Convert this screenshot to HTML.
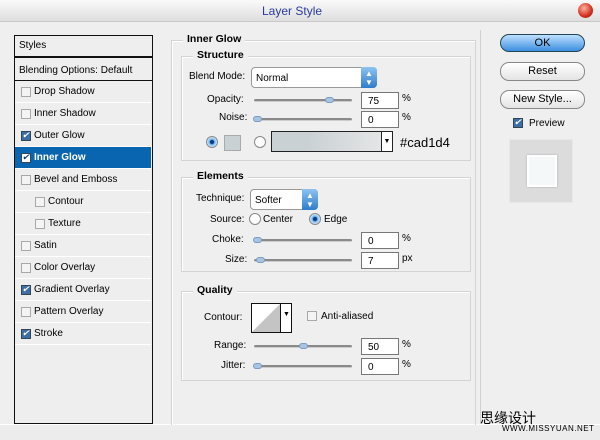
<!DOCTYPE html>
<html><head><style>
*{margin:0;padding:0;box-sizing:border-box}
body{width:600px;height:440px;background:#efefef;font-family:"Liberation Sans",Tahoma,sans-serif;font-size:10px;color:#000;position:relative;overflow:hidden}
.a{position:absolute}
.t{position:absolute;white-space:nowrap;font-size:10px}
.grp{position:absolute;border:1px solid #d4d4d4;box-shadow:1px 1px 0 #fff inset}
.lbl{position:absolute;background:#efefef;padding:0 4px;font-weight:bold;font-size:10.5px}
.row{position:absolute;left:15px;width:136px;height:22px;border-bottom:1px solid #fff;background:#eeeeee}
.cb{position:absolute;width:10px;height:10px;border:1px solid #a8a8a8;background:#f4f4f4;top:6px}
.ck{background:#3d6fa6;border-color:#345}
.ck:after{content:"✔";position:absolute;color:#fff;font-size:9px;left:0;top:-2px}
.ckw{background:#fff;border-color:#345}
.ckw:after{content:"✔";position:absolute;color:#0a3a80;font-size:9px;left:0;top:-2px}
.row span{position:absolute;top:5px}
.sl{position:absolute;height:3px;width:98px;background:#8a8a8a;border-radius:2px;border-bottom:1px solid #ccc}
.kn{position:absolute;width:9px;height:6px;background:#a9c4e0;border:1px solid #7a9cc0;border-radius:3px;top:-2px}
.in{position:absolute;width:38px;height:17px;background:#fff;border:1px solid #777;padding:3px 0 0 6px;font-size:10px}
.btn{position:absolute;left:500px;width:85px;height:19px;border:1px solid #888;border-radius:9px;background:linear-gradient(#fff,#e4e4e4);text-align:center;font-size:11px;line-height:17px}
.dd{position:absolute;background:#fff;border:1px solid #999;border-radius:4px;padding:5px 0 0 4px;font-size:10px}
.arr{position:absolute;right:-1px;top:-1px;bottom:-1px;width:16px;background:linear-gradient(#8ec3f0,#2e7ccb);border-radius:0 4px 4px 0;color:#fff;font-size:8px;text-align:center;line-height:9px;padding-top:2px}
.rd{position:absolute;width:12px;height:12px;border-radius:50%;border:1px solid #888;background:#fff}
.rs{background:radial-gradient(#0b3e80 25%,#6ab0f0 35%,#d6ebff 70%)}
</style></head><body>
<div class="a" style="left:0;top:0;width:600px;height:22px;background:linear-gradient(#fafafa,#dedede);border-bottom:1px solid #c8c8c8"></div>
<div class="t" style="left:262px;top:4px;font-size:12px;color:#2a3a9a">Layer Style</div>
<div class="a" style="left:578px;top:3px;width:15px;height:15px;border-radius:50%;background:radial-gradient(circle at 40% 35%,#ffb0a0,#d0301c 60%,#901808)"></div>
<div class="a" style="left:0;top:424px;width:600px;height:16px;border-top:1px solid #fff;background:#ececec"></div>
<div class="a" style="left:480px;top:30px;width:1px;height:394px;background:#d0d0d0"></div>

<div class="a" style="left:14px;top:35px;width:139px;height:389px;border:1px solid #111;background:#eeeeee"></div>
<div class="a" style="left:15px;top:56px;width:137px;height:2px;background:#111"></div>
<div class="t" style="left:19px;top:40px">Styles</div>
<div class="t" style="left:19px;top:65px">Blending Options: Default</div>
<div class="a" style="left:15px;top:80px;width:137px;height:1px;background:#111"></div>
<div class="row" style="top:81px"><i class="cb" style="left:6px"></i><span style="left:19px">Drop Shadow</span></div>
<div class="row" style="top:103px"><i class="cb" style="left:6px"></i><span style="left:19px">Inner Shadow</span></div>
<div class="row" style="top:125px"><i class="cb ck" style="left:6px"></i><span style="left:19px">Outer Glow</span></div>
<div class="row" style="top:147px;background:#0a65b0;color:#fff"><i class="cb ckw" style="left:6px"></i><span style="left:19px;font-weight:bold">Inner Glow</span></div>
<div class="row" style="top:169px"><i class="cb" style="left:6px"></i><span style="left:19px">Bevel and Emboss</span></div>
<div class="row" style="top:191px"><i class="cb" style="left:20px"></i><span style="left:33px">Contour</span></div>
<div class="row" style="top:213px"><i class="cb" style="left:20px"></i><span style="left:33px">Texture</span></div>
<div class="row" style="top:235px"><i class="cb" style="left:6px"></i><span style="left:19px">Satin</span></div>
<div class="row" style="top:257px"><i class="cb" style="left:6px"></i><span style="left:19px">Color Overlay</span></div>
<div class="row" style="top:279px"><i class="cb ck" style="left:6px"></i><span style="left:19px">Gradient Overlay</span></div>
<div class="row" style="top:301px"><i class="cb" style="left:6px"></i><span style="left:19px">Pattern Overlay</span></div>
<div class="row" style="top:323px"><i class="cb ck" style="left:6px"></i><span style="left:19px">Stroke</span></div>

<div class="grp" style="left:171px;top:40px;width:305px;height:385px;border-bottom:none"></div>
<div class="lbl" style="left:183px;top:33px">Inner Glow</div>
<div class="grp" style="left:181px;top:56px;width:290px;height:105px"></div>
<div class="lbl" style="left:193px;top:49px">Structure</div>
<div class="t" style="left:189px;top:71px">Blend Mode:</div>
<div class="dd" style="left:251px;top:67px;width:126px;height:21px">Normal<div class="arr">▲<br>▼</div></div>
<div class="t" style="left:207px;top:94px">Opacity:</div>
<div class="sl" style="left:254px;top:99px"><i class="kn" style="left:71px"></i></div>
<div class="in" style="left:361px;top:92px">75</div><div class="t" style="left:402px;top:93px">%</div>
<div class="t" style="left:219px;top:112px">Noise:</div>
<div class="sl" style="left:254px;top:118px"><i class="kn" style="left:-1px"></i></div>
<div class="in" style="left:361px;top:111px">0</div><div class="t" style="left:402px;top:112px">%</div>
<div class="rd rs" style="left:206px;top:136px"></div>
<div class="a" style="left:224px;top:135px;width:17px;height:16px;background:#cad1d4;border:1px solid #aaa"></div>
<div class="rd" style="left:254px;top:136px"></div>
<div class="a" style="left:271px;top:131px;width:122px;height:21px;border:1px solid #222;background:linear-gradient(90deg,#cad1d4 30%,#e8e8e8);"></div>
<div class="a" style="left:381px;top:132px;width:11px;height:19px;background:#fff;border-left:1px solid #222;font-size:7px;text-align:center;line-height:19px">▼</div>
<div class="t" style="left:400px;top:135px;font-size:13px">#cad1d4</div>

<div class="grp" style="left:181px;top:177px;width:290px;height:95px"></div>
<div class="lbl" style="left:193px;top:170px">Elements</div>
<div class="t" style="left:196px;top:193px">Technique:</div>
<div class="dd" style="left:250px;top:189px;width:68px;height:21px">Softer<div class="arr">▲<br>▼</div></div>
<div class="t" style="left:210px;top:214px">Source:</div>
<div class="rd" style="left:249px;top:213px"></div><div class="t" style="left:263px;top:214px">Center</div>
<div class="rd rs" style="left:309px;top:213px"></div><div class="t" style="left:324px;top:214px">Edge</div>
<div class="t" style="left:212px;top:234px">Choke:</div>
<div class="sl" style="left:254px;top:239px"><i class="kn" style="left:-1px"></i></div>
<div class="in" style="left:361px;top:232px">0</div><div class="t" style="left:402px;top:233px">%</div>
<div class="t" style="left:225px;top:254px">Size:</div>
<div class="sl" style="left:254px;top:259px"><i class="kn" style="left:2px"></i></div>
<div class="in" style="left:361px;top:252px">7</div><div class="t" style="left:402px;top:253px">px</div>

<div class="grp" style="left:181px;top:291px;width:290px;height:90px"></div>
<div class="lbl" style="left:193px;top:284px">Quality</div>
<div class="t" style="left:204px;top:312px">Contour:</div>
<div class="a" style="left:251px;top:303px;width:41px;height:30px;border:1px solid #111;background:#fff;overflow:hidden">
<svg width="29" height="28" style="position:absolute;left:0;top:0"><polygon points="0,28 28,0 28,28" fill="#c4c4c4"/></svg>
<div style="position:absolute;left:28px;top:0;width:12px;height:28px;border-left:1px solid #111;font-size:7px;text-align:center;line-height:22px">▼</div></div>
<i class="cb" style="left:307px;top:311px"></i><div class="t" style="left:321px;top:311px">Anti-aliased</div>
<div class="t" style="left:214px;top:340px">Range:</div>
<div class="sl" style="left:254px;top:345px"><i class="kn" style="left:45px"></i></div>
<div class="in" style="left:361px;top:338px">50</div><div class="t" style="left:402px;top:339px">%</div>
<div class="t" style="left:221px;top:360px">Jitter:</div>
<div class="sl" style="left:254px;top:365px"><i class="kn" style="left:-1px"></i></div>
<div class="in" style="left:361px;top:358px">0</div><div class="t" style="left:402px;top:359px">%</div>

<div class="btn" style="top:34px;height:18px;background:linear-gradient(#bfe0ff,#3b8fe0);border-color:#245;line-height:16px">OK</div>
<div class="btn" style="top:62px">Reset</div>
<div class="btn" style="top:90px">New Style...</div>
<i class="cb ck" style="left:513px;top:118px"></i><div class="t" style="left:529px;top:118px">Preview</div>
<div class="a" style="left:509px;top:139px;width:64px;height:64px;background:#dcdcdc;border:1px solid #e8e8e8"></div>
<div class="a" style="left:527px;top:155px;width:30px;height:32px;background:#f4f8f8;border:2px solid #fff;box-shadow:0 0 2px #aaa"></div>

<div class="t" style="left:480px;top:408px;font-size:14px;font-family:'Liberation Sans','Noto Sans CJK SC',sans-serif">思缘设计</div>
<div class="t" style="left:502px;top:424px;font-size:8px;letter-spacing:0.5px">WWW.MISSYUAN.NET</div>
</body></html>
